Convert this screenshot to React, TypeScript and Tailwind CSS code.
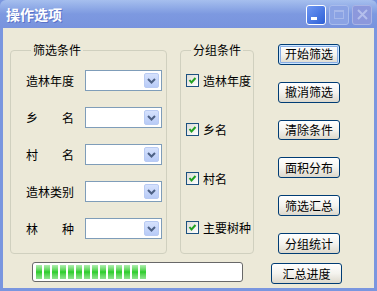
import React from "react";

const font = { fontFamily: '"Noto Sans CJK SC", "Noto Sans", sans-serif' };

const filters = [
  { label: ["造", "林", "年", "度"] },
  { label: ["乡", "名"] },
  { label: ["村", "名"] },
  { label: ["造", "林", "类", "别"] },
  { label: ["林", "种"] },
];

const groups = ["造林年度", "乡名", "村名", "主要树种"];

const actions = ["开始筛选", "撤消筛选", "清除条件", "面积分布", "筛选汇总", "分组统计"];

const Combo = () => (
  <div className="relative h-[21px] w-[77px] border border-[#7f9db9] bg-white">
    <div className="absolute right-[2px] top-[2px] flex h-[15px] w-[15px] items-center justify-center rounded-[2px] border border-[#b9cbf3] bg-gradient-to-b from-[#d6e2fd] to-[#b8cbf7]">
      <svg width="9" height="6" viewBox="0 0 9 6">
        <path d="M1 1 L4.5 4.5 L8 1" fill="none" stroke="#4d6185" strokeWidth="2" />
      </svg>
    </div>
  </div>
);

const CheckBox = () => (
  <div className="flex h-[13px] w-[13px] shrink-0 items-center justify-center border border-[#1c5180] bg-gradient-to-br from-[#dcdcd7] to-white">
    <svg width="9" height="9" viewBox="0 0 9 9">
      <path d="M1.5 4 L3.5 6.5 L7.5 2" fill="none" stroke="#21a121" strokeWidth="2" />
    </svg>
  </div>
);

const XpButton = ({ text, focus, w = "w-[62px]" }: { text: string; focus?: boolean; w?: string }) => (
  <button
    className={`flex h-[21px] ${w} items-center justify-center rounded-[3px] border border-[#003c74] bg-gradient-to-b from-white via-[#f4f3ee] to-[#dcd8cc] text-[12px] leading-none text-black ${
      focus ? "shadow-[inset_0_0_0_1px_#cee7ff,inset_0_0_0_2px_#89ade4]" : ""
    }`}
  >
    {text}
  </button>
);

const App = () => {
  return (
    <div className="flex h-[291px] w-[377px] flex-col overflow-hidden bg-[#7a96df]" style={font}>
      {/* title bar */}
      <div className="flex h-[28px] shrink-0 items-center justify-between rounded-t-[6px] bg-gradient-to-b from-[#a6bfee] via-[#7d99e0] to-[#7893de] pl-[6px] pr-[5px]">
        <span className="text-[14px] font-bold leading-none text-white [text-shadow:1px_1px_0_#5a72c8]">操作选项</span>
        <div className="flex gap-[3px] pt-[1px]">
          <div className="relative h-[20px] w-[20px] rounded-[3px] border border-white bg-gradient-to-br from-[#6f97f3] to-[#2d5fd6]">
            <div className="absolute bottom-[4px] left-[4px] h-[3px] w-[6px] bg-white" />
          </div>
          <div className="flex h-[20px] w-[20px] items-center justify-center rounded-[3px] border border-[#a9bcec] bg-[#8ba3e4]">
            <div className="h-[9px] w-[10px] border border-t-2 border-[#a6b8ea]" />
          </div>
          <div className="flex h-[20px] w-[20px] items-center justify-center rounded-[3px] border border-[#a9b4e4] bg-[#8c98dc]">
            <svg width="11" height="11" viewBox="0 0 11 11">
              <path d="M1 1 L10 10 M10 1 L1 10" stroke="#b4bfec" strokeWidth="2" />
            </svg>
          </div>
        </div>
      </div>

      {/* body */}
      <div className="mx-[3px] mb-[3px] flex flex-1 flex-col bg-[#ece9d8] pl-[7px] pt-[15px]">
        <div className="flex h-[211px]">
          <fieldset className="h-[211px] w-[157px] rounded-[4px] border border-[#d0d0bf] pl-[15px] pt-[13px]">
            <legend className="ml-[5px] px-[2px] text-[12px] leading-[14px] text-black">筛选条件</legend>
            <div className="flex flex-col gap-[16px]">
              {filters.map((f, i) => (
                <div key={i} className="flex items-center gap-[11px]">
                  <div className="flex w-[48px] justify-between text-[12px] leading-none text-black">
                    {f.label.map((c, j) => (
                      <span key={j}>{c}</span>
                    ))}
                  </div>
                  <Combo />
                </div>
              ))}
            </div>
          </fieldset>

          <fieldset className="ml-[13px] h-[211px] w-[74px] rounded-[4px] border border-[#d0d0bf] pl-[5px] pt-[17px]">
            <legend className="ml-[5px] px-[2px] text-[12px] leading-[14px] text-black">分组条件</legend>
            <div className="flex flex-col gap-[36px]">
              {groups.map((g) => (
                <div key={g} className="flex h-[13px] items-center gap-[4px] whitespace-nowrap text-[12px] leading-none text-black">
                  <CheckBox />
                  <span>{g}</span>
                </div>
              ))}
            </div>
          </fieldset>

          <div className="ml-[24px] mt-[1px] flex flex-col gap-[17px]">
            {actions.map((a, i) => (
              <XpButton key={a} text={a} focus={i === 0} />
            ))}
          </div>
        </div>

        <div className="mt-[8px] flex items-start">
          <div className="ml-[22px] flex h-[20px] w-[211px] items-center gap-[2px] rounded-[3px] border border-[#686868] bg-white px-[3px]">
            {Array.from({ length: 14 }).map((_, i) => (
              <div key={i} className="h-[14px] w-[6px] bg-gradient-to-b from-[#aeeeae] via-[#27cd27] to-[#8ee58e]" />
            ))}
          </div>
          <div className="ml-[28px] mt-[1px]">
            <XpButton text="汇总进度" w="w-[71px]" />
          </div>
        </div>
      </div>
    </div>
  );
};

export default App;
